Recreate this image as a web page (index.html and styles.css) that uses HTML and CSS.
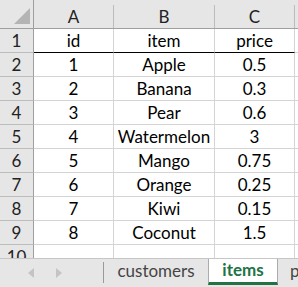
FILE: index.html
```html
<!DOCTYPE html>
<html lang="en">
<head>
  <meta charset="UTF-8">
  <title>items</title>
  <link rel="stylesheet" href="styles.css">
</head>
<body>
  <div class="sheet">
    <!-- Column headers -->
    <div class="row head-row">
      <div class="corner"><span class="tri"></span></div>
      <div class="col-head">A</div>
      <div class="col-head">B</div>
      <div class="col-head">C</div>
      <div class="col-head extra"></div>
    </div>
    <!-- Data rows -->
    <div class="row first">
      <div class="row-head">1</div>
      <div class="cell">id</div>
      <div class="cell">item</div>
      <div class="cell">price</div>
      <div class="cell extra"></div>
    </div>
    <div class="row">
      <div class="row-head">2</div>
      <div class="cell">1</div>
      <div class="cell">Apple</div>
      <div class="cell">0.5</div>
      <div class="cell extra"></div>
    </div>
    <div class="row">
      <div class="row-head">3</div>
      <div class="cell">2</div>
      <div class="cell">Banana</div>
      <div class="cell">0.3</div>
      <div class="cell extra"></div>
    </div>
    <div class="row">
      <div class="row-head">4</div>
      <div class="cell">3</div>
      <div class="cell">Pear</div>
      <div class="cell">0.6</div>
      <div class="cell extra"></div>
    </div>
    <div class="row">
      <div class="row-head">5</div>
      <div class="cell">4</div>
      <div class="cell">Watermelon</div>
      <div class="cell">3</div>
      <div class="cell extra"></div>
    </div>
    <div class="row">
      <div class="row-head">6</div>
      <div class="cell">5</div>
      <div class="cell">Mango</div>
      <div class="cell">0.75</div>
      <div class="cell extra"></div>
    </div>
    <div class="row">
      <div class="row-head">7</div>
      <div class="cell">6</div>
      <div class="cell">Orange</div>
      <div class="cell">0.25</div>
      <div class="cell extra"></div>
    </div>
    <div class="row">
      <div class="row-head">8</div>
      <div class="cell">7</div>
      <div class="cell">Kiwi</div>
      <div class="cell">0.15</div>
      <div class="cell extra"></div>
    </div>
    <div class="row">
      <div class="row-head">9</div>
      <div class="cell">8</div>
      <div class="cell">Coconut</div>
      <div class="cell">1.5</div>
      <div class="cell extra"></div>
    </div>
    <div class="row last">
      <div class="row-head">10</div>
      <div class="cell"></div>
      <div class="cell"></div>
      <div class="cell"></div>
      <div class="cell extra"></div>
    </div>
  </div>

  <!-- Sheet tabs -->
  <div class="tabbar">
    <div class="nav">
      <span class="arrow left"></span>
      <span class="arrow right"></span>
    </div>
    <div class="tabs">
      <div class="tab">customers</div>
      <div class="tab active">items</div>
      <div class="tab">p</div>
    </div>
  </div>
</body>
</html>
```

FILE: styles.css
```css
/* Reset */
body {
  margin: 0;
  width: 298px;
  height: 287px;
  overflow: hidden;
  background: #fff;
  font-family: 'Lato', 'Liberation Sans', sans-serif;
  font-size: 17px;
  color: #000;
}

/* Grid */
.sheet {
  height: 258px;
  overflow: hidden;
}

.row {
  display: grid;
  grid-template-columns: 34px 80px 101px 80px 1fr;
  height: 24px;
}

.head-row {
  height: 29px;
  background: #e6e6e6;
  border-bottom: 1px solid #9f9f9f;
  box-sizing: border-box;
}

.corner {
  position: relative;
  border-right: 1px solid #9f9f9f;
}

.corner .tri {
  position: absolute;
  left: 14px;
  top: 8px;
  width: 0;
  height: 0;
  border-left: 16px solid transparent;
  border-bottom: 16px solid #b4b4b4;
}

.col-head {
  margin-top: 5px;
  border-right: 1px solid #bcbcbc;
  text-align: center;
  line-height: 23px;
  color: #222;
}

.col-head.extra {
  border-right: none;
}

.row-head {
  background: #e6e6e6;
  border-right: 1px solid #9f9f9f;
  border-bottom: 1px solid #bcbcbc;
  text-align: center;
  line-height: 23px;
  color: #222;
}

.cell {
  border-right: 1px solid #d4d4d4;
  border-bottom: 1px solid #d4d4d4;
  text-align: center;
  line-height: 23px;
  white-space: nowrap;
}

.first .cell {
  border-bottom-color: #000;
}

.first .cell.extra {
  border-bottom-color: #d4d4d4;
}

.cell.extra {
  border-right: none;
}

/* Tab bar */
.tabbar {
  display: flex;
  height: 29px;
  background: #e6e6e6;
  border-top: 1px solid #c6c6c6;
  box-sizing: border-box;
  overflow: hidden;
}

.nav {
  flex: none;
  width: 104px;
  display: flex;
  align-items: center;
  gap: 22px;
  padding-left: 28px;
  box-sizing: border-box;
  border-right: 1px solid #9a9a9a;
  margin: 3px 0 4px;
}

.arrow {
  width: 0;
  height: 0;
  border-top: 5px solid transparent;
  border-bottom: 5px solid transparent;
}

.arrow.left {
  border-right: 6px solid #c4c4c4;
}

.arrow.right {
  border-left: 6px solid #c4c4c4;
}

.tabs {
  flex: none;
  display: flex;
}

.tab {
  flex: none;
  padding: 0 12px;
  line-height: 24px;
  color: #444;
  border-right: 1px solid #ababab;
  white-space: nowrap;
}

.tab:first-child {
  width: 104px;
  padding: 0;
  text-align: center;
  box-sizing: border-box;
  border-right: none;
}

.tab.active {
  width: 70px;
  padding: 0;
  text-align: center;
  box-sizing: border-box;
  margin-top: -1px;
  background: #fff;
  color: #217346;
  font-weight: bold;
  border-left: 1px solid #ababab;
  border-bottom: 3px solid #217346;
  height: 27px;
}
```
